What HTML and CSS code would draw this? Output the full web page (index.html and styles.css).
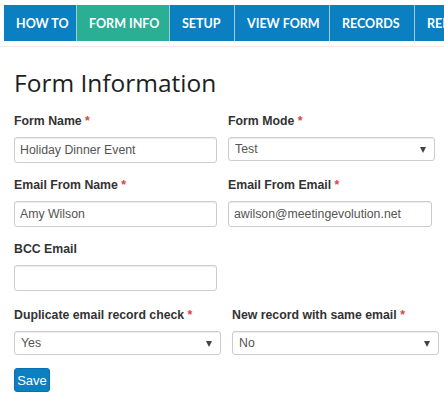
FILE: index.html
```html
<!DOCTYPE html>
<html>
<head>
<meta charset="utf-8">
<link rel="stylesheet" href="styles.css">
</head>
<body>
<div class="navwrap">
  <nav class="nav">
    <a class="tab">HOW TO</a>
    <a class="tab active">FORM INFO</a>
    <a class="tab">SETUP</a>
    <a class="tab">VIEW FORM</a>
    <a class="tab">RECORDS</a>
    <a class="tab">REPORTS</a>
  </nav>
</div>
<main class="form">
  <h1 class="title">Form Information</h1>
  <div class="grid">
    <div class="group">
      <label class="label">Form Name <span class="req">*</span></label>
      <input class="control" type="text" value="Holiday Dinner Event">
    </div>
    <div class="group">
      <label class="label">Form Mode <span class="req">*</span></label>
      <div class="select">Test</div>
    </div>
    <div class="group">
      <label class="label">Email From Name <span class="req">*</span></label>
      <input class="control" type="text" value="Amy Wilson">
    </div>
    <div class="group">
      <label class="label">Email From Email <span class="req">*</span></label>
      <input class="control narrow" type="text" value="awilson@meetingevolution.net">
    </div>
    <div class="group">
      <label class="label">BCC Email</label>
      <input class="control" type="text" value="">
    </div>
    <div class="group"></div>
  </div>
  <div class="grid wide">
    <div class="group">
      <label class="label">Duplicate email record check <span class="req">*</span></label>
      <div class="select">Yes</div>
    </div>
    <div class="group">
      <label class="label">New record with same email <span class="req">*</span></label>
      <div class="select">No</div>
    </div>
  </div>
  <button class="btn">Save</button>
</main>
</body>
</html>
```
FILE: styles.css
```css
* { box-sizing: border-box; }
body {
  margin: 0;
  background: #fff;
  font-family: "Liberation Sans", Arial, sans-serif;
  color: #333;
  width: 444px;
  overflow: hidden;
}
.navwrap {
  padding-top: 5px;
  padding-left: 4px;
  padding-bottom: 5px;
  border-bottom: 1px solid #ececec;
}
.nav {
  display: flex;
  height: 36px;
  width: 520px;
}
.tab {
  display: flex;
  align-items: center;
  height: 36px;
  padding: 0 12px;
  background: #0a7fc2;
  color: #fff;
  font-family: Lato, sans-serif;
  font-weight: 700;
  font-size: 12.5px;
  white-space: nowrap;
  border-right: 1px solid #a9c8d8;
}
.tab.active { background: #2aae94; }
.tab:nth-child(1) { width: 73px; }
.tab:nth-child(2) { width: 93px; }
.tab:nth-child(3) { width: 65px; }
.tab:nth-child(4) { width: 95px; }
.tab:nth-child(5) { width: 85px; }
.form {
  padding: 0 14px;
}
.title {
  margin: 20px 0 0;
  height: 32px;
  font-family: "Open Sans", sans-serif;
  font-weight: 400;
  font-size: 24.5px;
  line-height: 32px;
  color: #1e1e1e;
}
.grid {
  display: grid;
  grid-template-columns: 203px 207px;
  column-gap: 11px;
  margin-top: 14px;
}
.grid.wide {
  grid-template-columns: 207px 207px;
  margin-top: 2px;
}
.group {
  display: flex;
  flex-direction: column;
  margin-bottom: 14px;
}
.label {
  font-weight: 700;
  font-size: 12.3px;
  line-height: 17px;
  margin-bottom: 7px;
  color: #333;
}
.req { color: #e0443e; }
.control {
  height: 26px;
  width: 100%;
  border: 1px solid #cccccc;
  border-radius: 3px;
  box-shadow: inset 0 1px 1px rgba(0,0,0,0.075);
  padding: 0 5px;
  font-family: "Liberation Sans", Arial, sans-serif;
  font-size: 12.3px;
  color: #555;
  background: #fff;
}
.control.narrow { width: 204px; }
.select {
  position: relative;
  height: 24px;
  width: 100%;
  border: 1px solid #cccccc;
  border-radius: 3px;
  box-shadow: inset 0 1px 1px rgba(0,0,0,0.075);
  padding: 0 6px;
  font-size: 12.3px;
  line-height: 22px;
  color: #555;
  background: #fff;
}
.select::after {
  content: "";
  position: absolute;
  right: 8px;
  top: 9px;
  border-left: 3.5px solid transparent;
  border-right: 3.5px solid transparent;
  border-top: 6px solid #444;
}
.btn {
  display: block;
  height: 24px;
  width: 36px;
  padding: 0;
  margin-top: -1px;
  background: #0a7fc2;
  border: 1px solid #0970ab;
  border-radius: 3px;
  color: #fff;
  font-family: "Liberation Sans", Arial, sans-serif;
  font-size: 13px;
}
```
